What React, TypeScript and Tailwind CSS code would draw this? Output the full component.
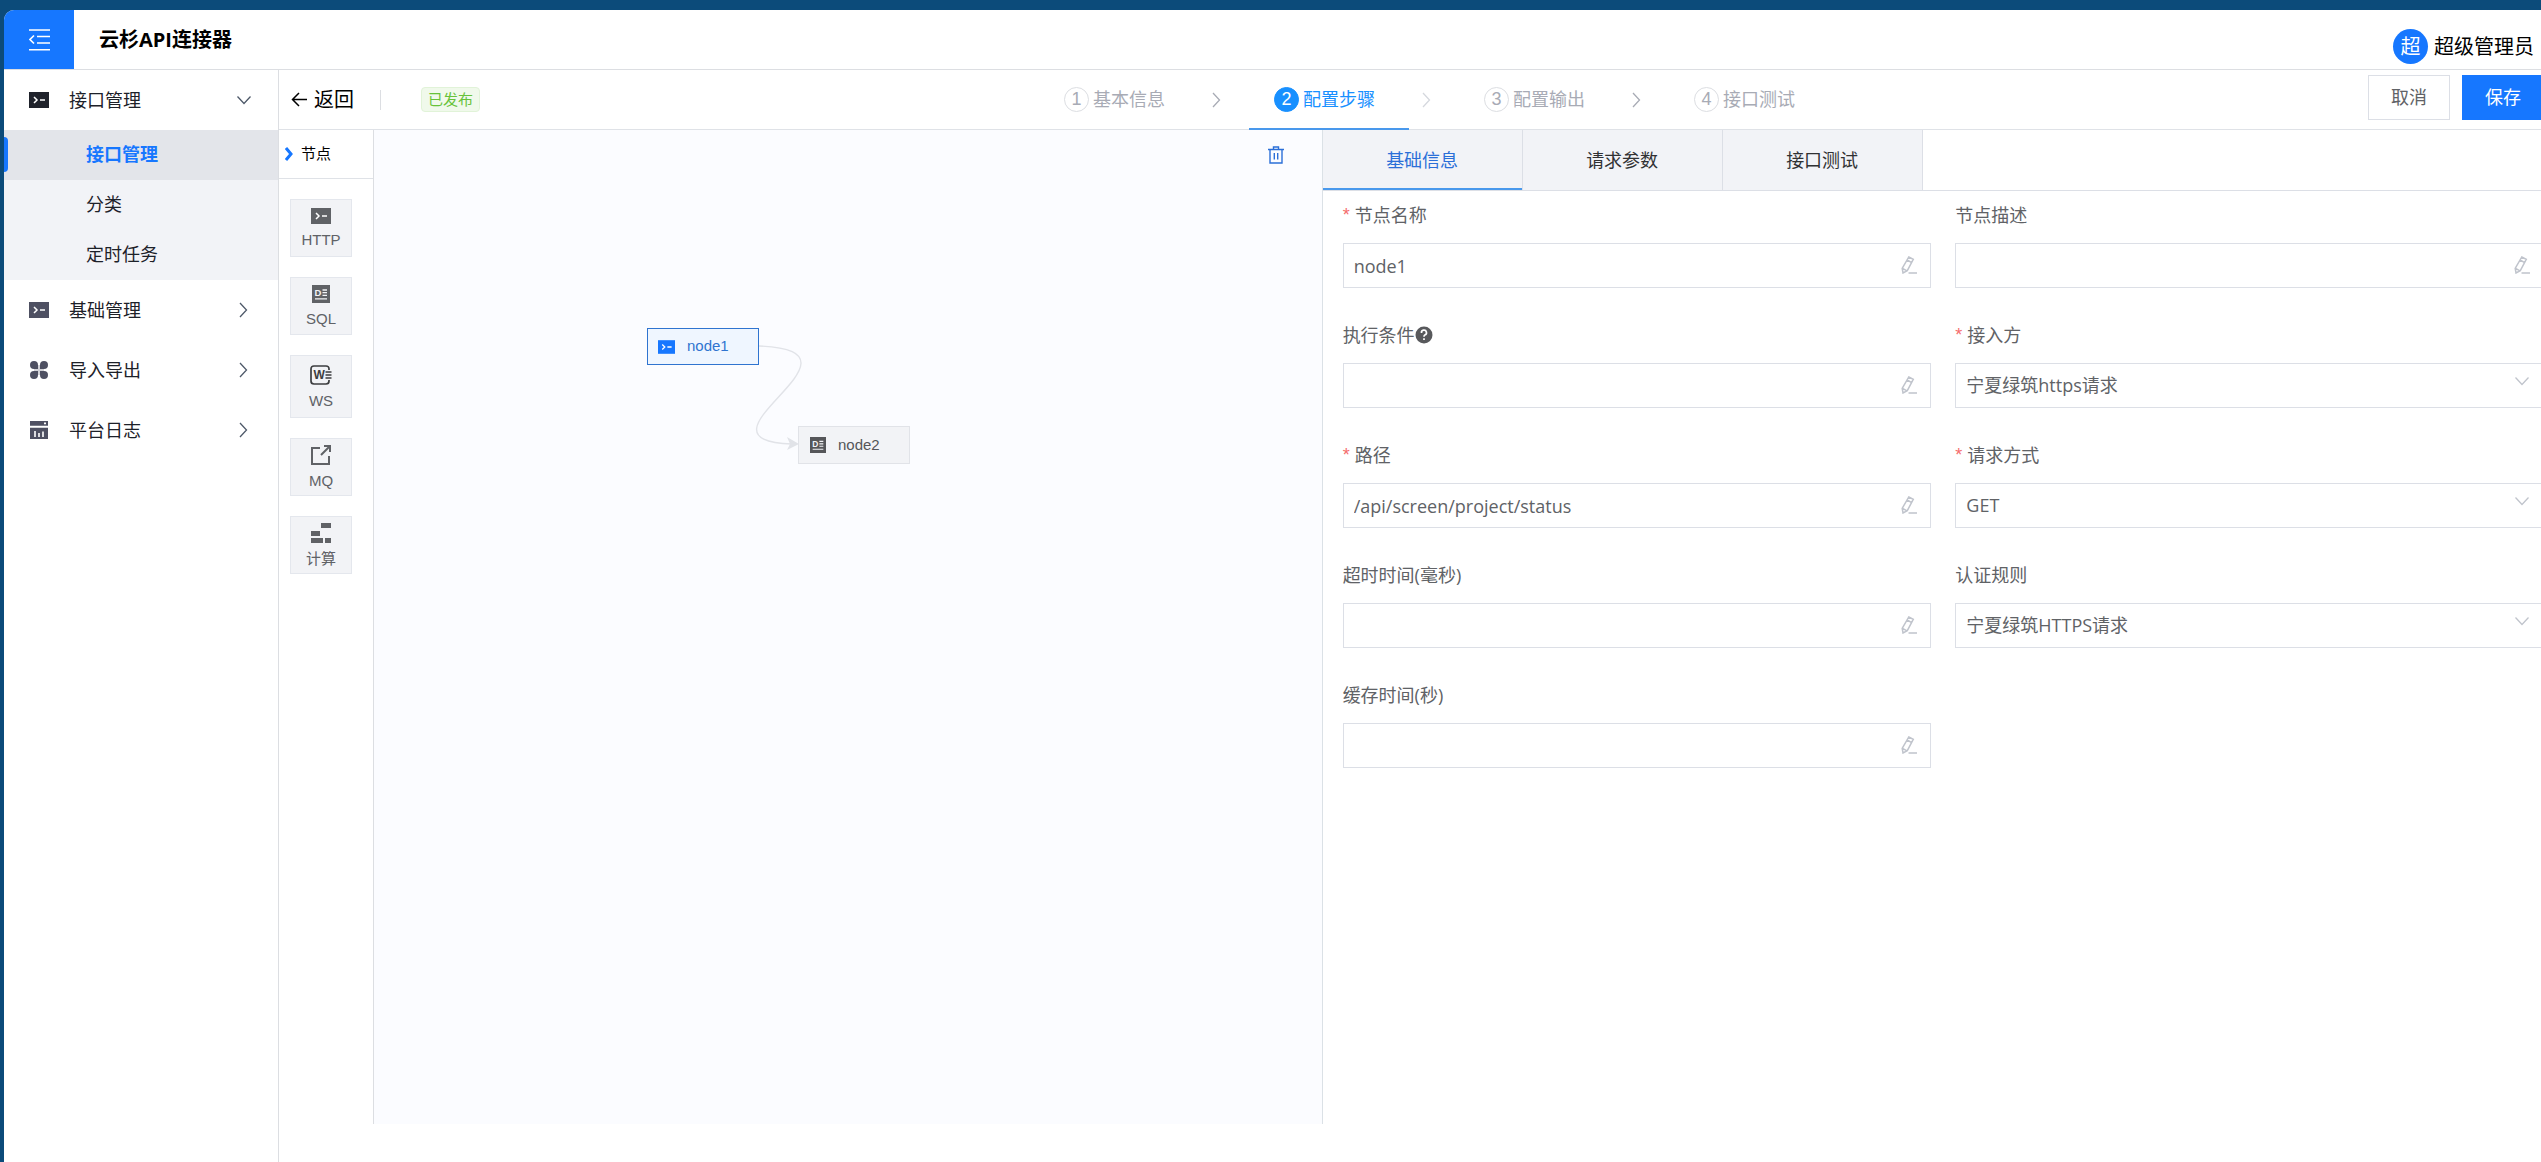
import React, { useState } from "react";

const menus = [
  {
    title: "接口管理",
    icon: "terminal",
    children: ["接口管理", "分类", "定时任务"],
  },
  { title: "基础管理", icon: "terminal", children: [] },
  { title: "导入导出", icon: "clover", children: [] },
  { title: "平台日志", icon: "log", children: [] },
];

const steps = ["基本信息", "配置步骤", "配置输出", "接口测试"];

const palette = [
  { label: "HTTP", icon: "terminal" },
  { label: "SQL", icon: "sql" },
  { label: "WS", icon: "ws" },
  { label: "MQ", icon: "mq" },
  { label: "计算", icon: "calc" },
];

const tabs = ["基础信息", "请求参数", "接口测试"];

type Field = {
  id: string;
  label: string;
  value: string;
  required?: boolean;
  help?: boolean;
  select?: boolean;
};

const fields: Field[] = [
  { id: "name", label: "节点名称", value: "node1", required: true },
  { id: "desc", label: "节点描述", value: "" },
  { id: "condition", label: "执行条件", value: "", help: true },
  { id: "source", label: "接入方", value: "宁夏绿筑https请求", required: true, select: true },
  { id: "path", label: "路径", value: "/api/screen/project/status", required: true },
  { id: "method", label: "请求方式", value: "GET", required: true, select: true },
  { id: "timeout", label: "超时时间(毫秒)", value: "" },
  { id: "auth", label: "认证规则", value: "宁夏绿筑HTTPS请求", select: true },
  { id: "cache", label: "缓存时间(秒)", value: "" },
];

export default function App() {
  const [page, setPage] = useState("接口管理");
  const [step, setStep] = useState(1);

  return (
    <div className="min-h-screen bg-[#0c4b7a] pt-[10px] pl-1 font-['Open_Sans','Noto_Sans_CJK_SC',sans-serif]">
      <div className="flex min-h-[calc(100vh-10px)] flex-col overflow-hidden rounded-tl-[10px] bg-white">
        <header className="flex h-[60px] shrink-0 items-center border-b border-[#dcdee2]">
          <button aria-label="收起菜单" className="flex h-full w-[70px] items-center justify-center bg-[#1677ff] text-white">
            <FoldIcon />
          </button>
          <h1 className="ml-[25px] text-[20px] font-bold text-black">云杉API连接器</h1>
          <div className="mt-[14px] mr-[7px] ml-auto flex items-center gap-[6px] text-[20px] text-black">
            <span className="flex h-[35px] w-[35px] items-center justify-center rounded-full bg-[#1677ff] text-white">
              超
            </span>
            超级管理员
          </div>
        </header>

        <div className="flex flex-1">
          <Sidebar page={page} setPage={setPage} />
          <main className="min-w-0 flex-1">
            <Toolbar step={step} setStep={setStep} />
            <div className="flex min-h-[calc(100vh-168px)]">
              <Palette />
              <Canvas />
              <NodePanel />
            </div>
          </main>
        </div>
      </div>
    </div>
  );
}

function Sidebar({ page, setPage }: { page: string; setPage: (p: string) => void }) {
  return (
    <nav className="w-[275px] shrink-0 border-r border-[#dcdee2] text-[18px] text-[#1d2129]">
      {menus.map((menu) => {
        const open = menu.children.length > 0;
        return (
          <div key={menu.title}>
            <button
              className={`flex h-[60px] w-full items-center pr-[26px] pl-[25px] ${open ? "text-[#1f222b]" : "text-[#4e5062]"}`}
            >
              <span className="flex w-5 justify-center">
                <NodeIcon name={menu.icon} />
              </span>
              <span className="ml-5 text-[#1d2129]">{menu.title}</span>
              <span className="ml-auto text-[#4e5969]">{open ? <ChevronDown /> : <ChevronRight />}</span>
            </button>
            {open && (
              <ul className="bg-[#f2f3f7]">
                {menu.children.map((item) => (
                  <li key={item}>
                    <a
                      href="#"
                      onClick={() => setPage(item)}
                      className={`relative flex h-[50px] items-center pb-[2px] pl-[82px] ${
                        item === page ? "bg-[#e3e5ea] font-bold text-[#1677ff]" : ""
                      }`}
                    >
                      {item === page && <i className="absolute left-0 h-[35px] w-1 rounded-r bg-[#1677ff]" />}
                      {item}
                    </a>
                  </li>
                ))}
              </ul>
            )}
          </div>
        );
      })}
    </nav>
  );
}

function Toolbar({ step, setStep }: { step: number; setStep: (s: number) => void }) {
  return (
    <div className="-mr-[3px] flex h-[60px] items-stretch justify-between border-b border-[#dfe2e7]">
      <div className="flex w-[221px] items-center pl-3">
        <button className="flex items-center gap-[6px] text-[20px] text-black">
          <svg width="17" height="16" viewBox="0 0 17 16" fill="none" stroke="currentColor" strokeWidth="1.5">
            <path d="M16 7.5H2M8 1L1.5 7.5L8 14" />
          </svg>
          返回
        </button>
        <span className="ml-[26px] h-5 w-px bg-[#dcdee2]" />
        <span className="ml-10 flex h-[25px] shrink-0 items-center rounded border border-[#e1f3d8] bg-[#f0f9eb] px-[6px] text-[15px] text-[#67c23a]">
          已发布
        </span>
      </div>

      <ol className="flex text-[18px]">
        {steps.map((name, i) => (
          <li key={name} className="flex">
            <button
              onClick={() => setStep(i)}
              className={`relative flex w-[160px] items-center pl-[25px] ${i === step ? "text-[#1890ff]" : "text-[#a8abb5]"}`}
            >
              <span
                className={`mr-1 flex h-[25px] w-[25px] items-center justify-center rounded-full border font-['Liberation_Sans',sans-serif] ${
                  i === step ? "border-[#1890ff] bg-[#1890ff] text-white" : "border-[#dcdee2]"
                }`}
              >
                {i + 1}
              </span>
              {name}
              {i === step && <i className="absolute inset-x-0 -bottom-px h-[2px] bg-[#4998ec]" />}
            </button>
            {i < steps.length - 1 && (
              <span className={`flex w-[50px] items-center pl-[10px] ${i === step ? "text-[#d5d8de]" : "text-[#a8abb5]"}`}>
                <ChevronRight />
              </span>
            )}
          </li>
        ))}
      </ol>

      <div className="flex gap-3 pt-[5px] text-[18px]">
        <button className="h-[45px] w-[82px] border border-[#dcdfe6] bg-white text-[#606266]">取消</button>
        <button className="h-[45px] w-[82px] bg-[#1677ff] text-white">保存</button>
      </div>
    </div>
  );
}

function Palette() {
  return (
    <aside className="w-[95px] shrink-0 border-r border-[#dcdee2] font-['Liberation_Sans','Noto_Sans_CJK_SC',sans-serif] text-[15px]">
      <div className="flex h-[49px] items-center gap-2 border-b border-[#dfe2e7] pl-[6px] text-black">
        <svg width="8" height="14" viewBox="0 0 8 14" fill="none" stroke="#1677ff" strokeWidth="3">
          <path d="M1 1L6 7L1 13" />
        </svg>
        节点
      </div>
      <div className="flex flex-col gap-5 py-5 pl-[11px]">
        {palette.map((item) => (
          <button
            key={item.label}
            className={`flex w-[62px] flex-col items-center justify-center gap-1 border border-[#e4e7ed] bg-[#f2f3f6] pt-1 text-[#606266] ${
              item.icon === "ws" ? "h-[63px]" : "h-[58px]"
            }`}
          >
            <NodeIcon name={item.icon} />
            <span className="leading-6">{item.label}</span>
          </button>
        ))}
      </div>
    </aside>
  );
}

function Canvas() {
  return (
    <section className="relative min-w-0 flex-[7] bg-[#fbfcff] font-['Liberation_Sans',sans-serif] text-[15px]">
      <button aria-label="删除" className="absolute top-4 right-[38px] text-[#2b6fd8]">
        <svg width="16" height="18" viewBox="0 0 16 18" fill="none" stroke="currentColor" strokeWidth="1.4">
          <path d="M0 3.5H16M5.5 3V1H10.5V3M2 3.5V17H14V3.5M6.3 7V13.5M9.7 7V13.5" />
        </svg>
      </button>
      <svg className="absolute top-0 left-0" width="560" height="360" viewBox="0 0 560 360" fill="none">
        <path d="M385 216C510 221 305 310 418 314" stroke="#e1e3e8" strokeWidth="1.4" />
        <path d="M413 307L425 314L413 320L416 314Z" fill="#e1e3e8" />
      </svg>
      <div className="absolute top-[198px] left-[273px] flex h-[37px] w-[112px] items-center border border-[#2f74d0] bg-[#eff6ff] pl-[10px] text-[#2f74d0]">
        <span className="w-[29px] text-[#1677ff]">
          <NodeIcon name="terminal" small />
        </span>
        node1
      </div>
      <div className="absolute top-[296px] left-[424px] flex h-[38px] w-[112px] items-center border border-[#e1e3e8] bg-[#f2f3f6] pl-[11px] text-[#555659]">
        <span className="w-[28px]">
          <NodeIcon name="sql" small />
        </span>
        node2
      </div>
    </section>
  );
}

function NodePanel() {
  const [tab, setTab] = useState(tabs[0]);

  return (
    <section className="min-w-0 flex-[9] overflow-hidden border-l border-[#dbe1e6] text-[18px]">
      <div role="tablist" className="flex h-[61px] border-b border-[#dcdfe6]">
        {tabs.map((name) => (
          <button
            key={name}
            role="tab"
            onClick={() => setTab(name)}
            className={`relative w-[200px] border-r border-[#dcdfe6] bg-[#f2f3f7] ${name === tab ? "text-[#2b6fd8]" : "text-[#303133]"}`}
          >
            {name}
            {name === tab && <i className="absolute inset-x-0 bottom-0 h-[2px] bg-[#4998ec]" />}
          </button>
        ))}
      </div>
      <form className="-mr-[3px] grid grid-cols-2 gap-x-6 gap-y-[23px] pl-5">
        {fields.map((field) => (
          <FormItem key={field.id} field={field} />
        ))}
      </form>
    </section>
  );
}

function FormItem({ field }: { field: Field }) {
  const box = "h-[45px] w-full border border-[#dcdfe6] bg-white px-[10px] text-[#606266] outline-none";

  return (
    <div>
      <label htmlFor={field.id} className="mb-1 flex h-12 items-center text-[#606266]">
        {field.required && <span className="mr-[5px] font-['Liberation_Sans',sans-serif] text-[#f56c6c]">*</span>}
        {field.label}
        {field.help && <HelpIcon />}
      </label>
      <div className="relative">
        {field.select ? (
          <>
            <select id={field.id} className={`${box} appearance-none`}>
              <option>{field.value}</option>
            </select>
            <span className="pointer-events-none absolute top-[10px] right-[14px] text-[#c0c4cc]">
              <ChevronDown />
            </span>
          </>
        ) : (
          <>
            <input id={field.id} defaultValue={field.value} className={box} />
            <svg
              className="absolute top-[13px] right-[14px] text-[#c0c4cc]"
              width="16"
              height="18"
              viewBox="0 0 16 18"
              fill="none"
              stroke="currentColor"
              strokeWidth="1.5"
            >
              <path d="M7.8 1L12.3 3.4L6.3 14.6L2 17L1.2 12.5ZM6.2 4L10.6 6.6M1.5 12.3L6 14.8M7.5 17H16" />
            </svg>
          </>
        )}
      </div>
    </div>
  );
}

const NodeIcon = ({ name, small }: { name: string; small?: boolean }) => {
  if (name === "terminal") {
    return (
      <svg width={small ? 17 : 20} height={small ? 14 : 16} viewBox="0 0 20 16" fill="none">
        <rect width="20" height="16" fill="currentColor" />
        <path d="M5 5L8 8L5 11M11 8H16" stroke="#fff" strokeWidth="1.5" />
      </svg>
    );
  }
  if (name === "sql") {
    return (
      <svg width={small ? 16 : 18} height={small ? 16 : 18} viewBox="0 0 18 18" fill="none">
        <rect width="18" height="18" fill="currentColor" />
        <text x="2.5" y="11" fontSize="9.5" fontWeight="bold" fill="#f2f3f6">
          D
        </text>
        <path d="M10.5 5H15M10.5 7.7H15M10.5 10.4H15M3 13.8H15" stroke="#f2f3f6" strokeWidth="1.3" />
      </svg>
    );
  }
  if (name === "ws") {
    return (
      <svg width="22" height="20" viewBox="0 0 22 20" fill="none" stroke="#3d3e40" strokeWidth="1.7">
        <path d="M19 5V4Q19 1 16 1H4Q1 1 1 4V16Q1 19 4 19H16Q19 19 19 16V15M15.5 7H21.5M15.5 10H21.5M15.5 13H21.5" />
        <text x="3.5" y="14" fontSize="12" fontWeight="bold" fill="#3d3e40" stroke="none">
          W
        </text>
      </svg>
    );
  }
  if (name === "mq") {
    return (
      <svg width="20" height="20" viewBox="0 0 20 20" fill="none" stroke="currentColor" strokeWidth="2">
        <path d="M9 3H1V19H18V11M10 10L18 2M13 1H19V7" />
      </svg>
    );
  }
  if (name === "calc") {
    return (
      <svg width="20" height="20" viewBox="0 0 20 20" fill="currentColor">
        <path d="M10 0H20V5H10ZM0 8H9V13H0ZM0 15H12V20H0ZM14 15H20V20H14Z" />
      </svg>
    );
  }
  if (name === "clover") {
    return (
      <svg width="18" height="18" viewBox="0 0 18 18" fill="currentColor">
        <path d="M8 9V4A4 4 0 1 0 4 8H8ZM10 8H14A4 4 0 1 0 10 4ZM8 10H4A4 4 0 1 0 8 14ZM10 10V14A4 4 0 1 0 14 10Z" />
        <path d="M8 4H10V14H8ZM4 8H14V10H4Z" opacity="0.25" />
      </svg>
    );
  }
  return (
    <svg width="18" height="18" viewBox="0 0 18 18" fill="none">
      <path d="M0 0H18V4.7H0ZM0 6.7H18V18H0Z" fill="currentColor" />
      <path d="M14 2.4H16M5 10V16M9 12V16M13 10.5V16" stroke="#fff" strokeWidth="1.6" />
    </svg>
  );
};

const FoldIcon = () => (
  <svg width="21" height="22" viewBox="0 0 21 22" fill="none" stroke="currentColor" strokeWidth="1.6">
    <path d="M0 1H21M8 7.5H21M8 14H21M0 20.8H21M5 6.5L1 10.5L5 14.5" />
  </svg>
);

const HelpIcon = () => (
  <svg width="18" height="18" viewBox="0 0 18 18" fill="none">
    <circle cx="9" cy="9" r="8.5" fill="#58595c" />
    <path d="M6.5 7A2.5 2.5 0 1 1 9.8 9Q9 9.4 9 10.8M9 12.2V14" stroke="#fff" strokeWidth="1.7" />
  </svg>
);

const ChevronDown = () => (
  <svg width="16" height="16" viewBox="0 0 16 16" fill="none" stroke="currentColor" strokeWidth="1.3">
    <path d="M1.5 4.5L8 11.5L14.5 4.5" />
  </svg>
);

const ChevronRight = () => (
  <svg width="16" height="16" viewBox="0 0 16 16" fill="none" stroke="currentColor" strokeWidth="1.3">
    <path d="M4 1L10.5 8L4 15" />
  </svg>
);
